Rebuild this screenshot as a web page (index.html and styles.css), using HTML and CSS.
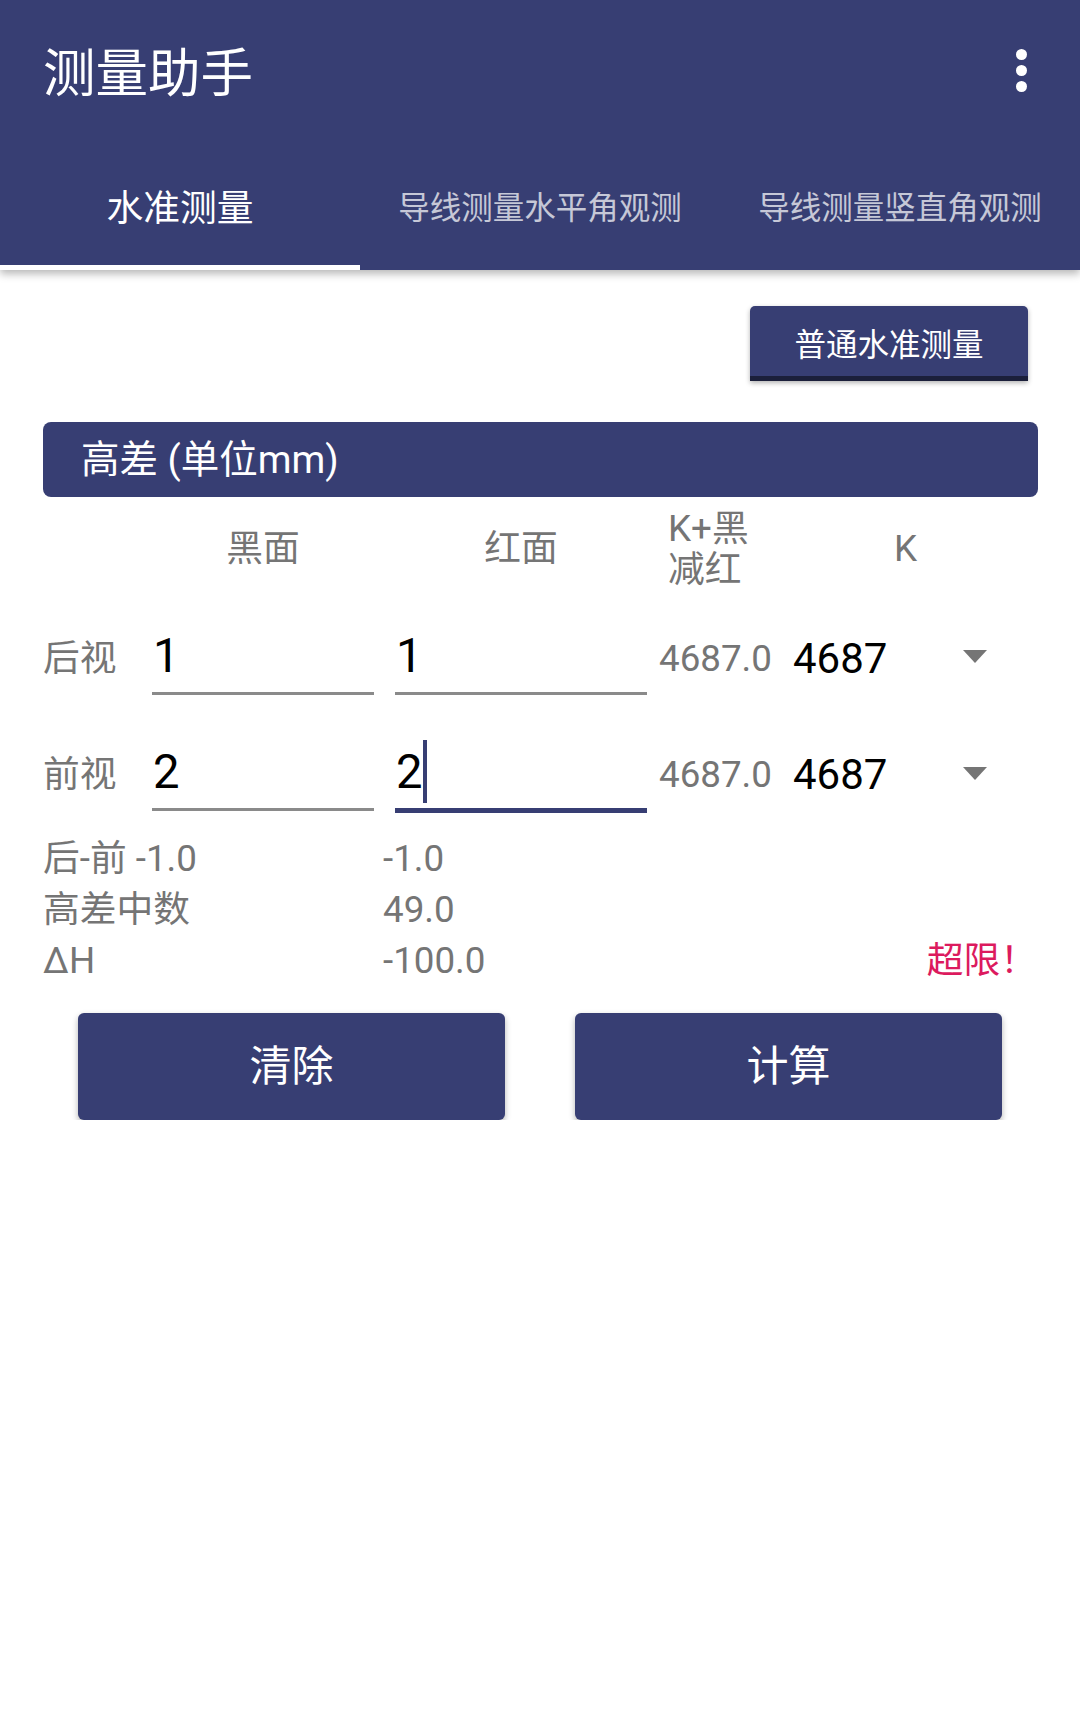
FILE: index.html
```html
<!DOCTYPE html>
<html lang="zh-CN">
<head>
<meta charset="utf-8">
<title>测量助手</title>
<link rel="stylesheet" href="styles.css">
</head>
<body>
<header class="appbar">
  <div class="toolbar">
    <h1 class="title">测量助手</h1>
    <div class="menu" aria-label="更多选项">
      <span class="dot"></span><span class="dot"></span><span class="dot"></span>
    </div>
  </div>
  <nav class="tabs">
    <div class="tab active">水准测量</div>
    <div class="tab multi">导线测量水平角观测</div>
    <div class="tab multi">导线测量竖直角观测</div>
  </nav>
</header>

<main class="content">
  <div class="mode-row">
    <div class="mode-btn">普通水准测量</div>
  </div>

  <div class="section-bar">高差 (单位mm)</div>

  <div class="form">
    <div class="cell"></div>
    <div class="colhead w1">黑面</div>
    <div class="colhead w2">红面</div>
    <div class="colhead kb">K+黑减红</div>
    <div class="colhead kk">K</div>

    <div class="label">后视</div>
    <div class="edit w1">1</div>
    <div class="edit w2">1</div>
    <div class="value">4687.0</div>
    <div class="spinner"><span class="spin-text">4687</span><span class="arrow"></span></div>

    <div class="label">前视</div>
    <div class="edit w1">2</div>
    <div class="edit w2 focused">2<span class="caret"></span></div>
    <div class="value">4687.0</div>
    <div class="spinner"><span class="spin-text">4687</span><span class="arrow"></span></div>
  </div>

  <div class="results">
    <div>后-前 -1.0</div>
    <div>-1.0</div>
    <div></div>
    <div>高差中数</div>
    <div>49.0</div>
    <div></div>
    <div>ΔH</div>
    <div>-100.0</div>
    <div class="warn">超限！</div>
  </div>

  <div class="actions">
    <div class="action-cell"><div class="btn">清除</div></div>
    <div class="action-cell"><div class="btn">计算</div></div>
  </div>
</main>
</body>
</html>
```

FILE: styles.css
```css
* { box-sizing: border-box; }

html, body {
  margin: 0;
  padding: 0;
  background: #ffffff;
}

body {
  width: 1080px;
  font-family: Roboto, "Noto Sans CJK SC", sans-serif;
  color: #757575;
}

/* ---------- App bar ---------- */
.appbar {
  position: relative;
  z-index: 2;
  height: 270px;
  background: #373e73;
  box-shadow: 0 4px 8px rgba(0, 0, 0, 0.28);
}

.toolbar {
  height: 147px;
  display: flex;
  align-items: center;
  padding-left: 43px;
}

.title {
  margin: 0;
  font-size: 52.5px;
  font-weight: 400;
  line-height: 60px;
  color: #ffffff;
}

.menu {
  margin-left: auto;
  margin-right: 53px;
  margin-bottom: 7px;
  display: flex;
  flex-direction: column;
  gap: 5px;
}

.dot {
  display: block;
  width: 11px;
  height: 11px;
  border-radius: 50%;
  background: #ffffff;
}

.tabs {
  height: 123px;
  display: grid;
  grid-template-columns: repeat(3, 1fr);
}

.tab {
  display: flex;
  align-items: center;
  justify-content: center;
  white-space: nowrap;
  color: rgba(255, 255, 255, 0.72);
  font-size: 31.5px;
  line-height: 40px;
}

.tab.active {
  color: #ffffff;
  font-size: 36.75px;
  box-shadow: inset 0 -5px 0 #ffffff;
}

/* ---------- Content ---------- */
.mode-row {
  display: flex;
  justify-content: flex-end;
  padding: 36px 52px 0 0;
}

.mode-btn {
  width: 278px;
  height: 75px;
  padding-top: 9px;
  display: flex;
  align-items: center;
  justify-content: center;
  background: #373e73;
  border-bottom: 5px solid #1b1f3a;
  border-radius: 5px 5px 0 0;
  box-shadow: 0 2px 5px rgba(0, 0, 0, 0.3);
  color: #ffffff;
  font-size: 31.5px;
  line-height: 40px;
}

.section-bar {
  margin: 41px 42px 0 43px;
  height: 75px;
  padding-left: 38px;
  display: flex;
  align-items: center;
  background: #373e73;
  border-radius: 8px;
  color: #ffffff;
  font-size: 38.5px;
  line-height: 48px;
}

/* ---------- Form ---------- */
.form {
  margin: 0 43px;
  display: grid;
  grid-template-columns: 109px 243px 264px 121px 1fr;
  grid-template-rows: 103px 117px 116px;
  align-items: center;
  font-size: 36.75px;
  line-height: 44px;
}

.colhead {
  color: #757575;
  text-align: center;
}

.colhead.w1 { width: 222px; }
.colhead.w2 { width: 252px; }

.colhead.kb {
  text-align: left;
  padding-left: 9px;
  width: 110px;
  line-height: 41px;
}

.colhead.kk {
  padding-right: 6px;
}

.label {
  color: #757575;
}

.edit {
  font-size: 47.25px;
  line-height: 56px;
  color: #000000;
  padding: 5px 0 8px 1px;
  border-bottom: 3px solid #8a8a8a;
}

.edit.w1 { width: 222px; }
.edit.w2 { width: 252px; }

.edit.focused {
  padding-top: 7px;
  border-bottom: 5px solid #373e73;
}

.caret {
  display: inline-block;
  vertical-align: top;
  width: 4px;
  height: 63px;
  margin-top: -4px;
  margin-bottom: -3px;
  background: #373e73;
}

.value {
  color: #757575;
}

.spinner {
  display: flex;
  align-items: center;
  padding-left: 13px;
}

.spin-text {
  font-size: 42px;
  line-height: 50px;
  color: #000000;
}

.arrow {
  margin-left: auto;
  margin-right: 50px;
  margin-bottom: 4px;
  width: 0;
  height: 0;
  border-left: 12.5px solid transparent;
  border-right: 12.5px solid transparent;
  border-top: 13px solid #757575;
}

/* ---------- Results ---------- */
.results {
  margin: 0 43px;
  display: grid;
  grid-template-columns: 340px 1fr auto;
  font-size: 36.75px;
  line-height: 51px;
  color: #757575;
}

.warn {
  color: #dc1a5e;
  margin-right: 0;
}

/* ---------- Actions ---------- */
.actions {
  margin: 27px 43px 0;
  display: grid;
  grid-template-columns: 1fr 1fr;
}

.action-cell {
  padding: 0 35px;
}

.btn {
  height: 107px;
  display: flex;
  align-items: center;
  justify-content: center;
  background: #373e73;
  border-radius: 6px;
  box-shadow: 0 3px 6px rgba(0, 0, 0, 0.3);
  color: #ffffff;
  font-size: 42px;
  line-height: 50px;
}
```
